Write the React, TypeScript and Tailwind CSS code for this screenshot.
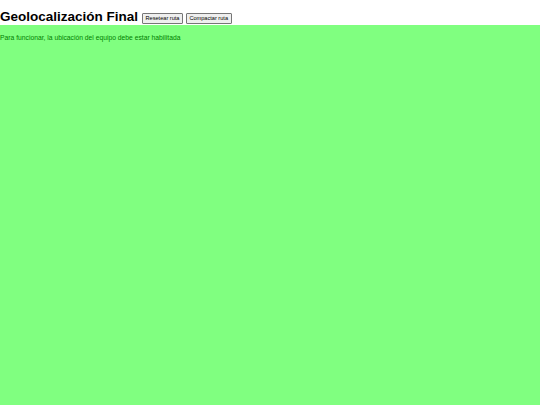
export default function App() {
  return (
    <div className="w-[540px] h-[405px] flex flex-col bg-white" style={{ fontFamily: '"Liberation Sans", Arial, sans-serif' }}>
      <div className="h-[25px] flex items-end gap-[4px]">
        <h1 className="text-[13.5px] font-bold leading-[16px] text-black">Geolocalización Final</h1>
        <div className="flex gap-[3px] mb-[1px]">
          <button className="text-[5.6px] leading-[7px] px-[2.5px] py-[1px] border border-[#767676] bg-[#efefef] rounded-[1px] text-black">Resetear ruta</button>
          <button className="text-[5.6px] leading-[7px] px-[2.5px] py-[1px] border border-[#767676] bg-[#efefef] rounded-[1px] text-black">Compactar ruta</button>
        </div>
      </div>
      <div className="flex-1 bg-[#80ff80] pt-[9px]">
        <p className="text-[6.75px] leading-[8px] text-[#008000]">Para funcionar, la ubicación del equipo debe estar habilitada</p>
      </div>
    </div>
  );
}
